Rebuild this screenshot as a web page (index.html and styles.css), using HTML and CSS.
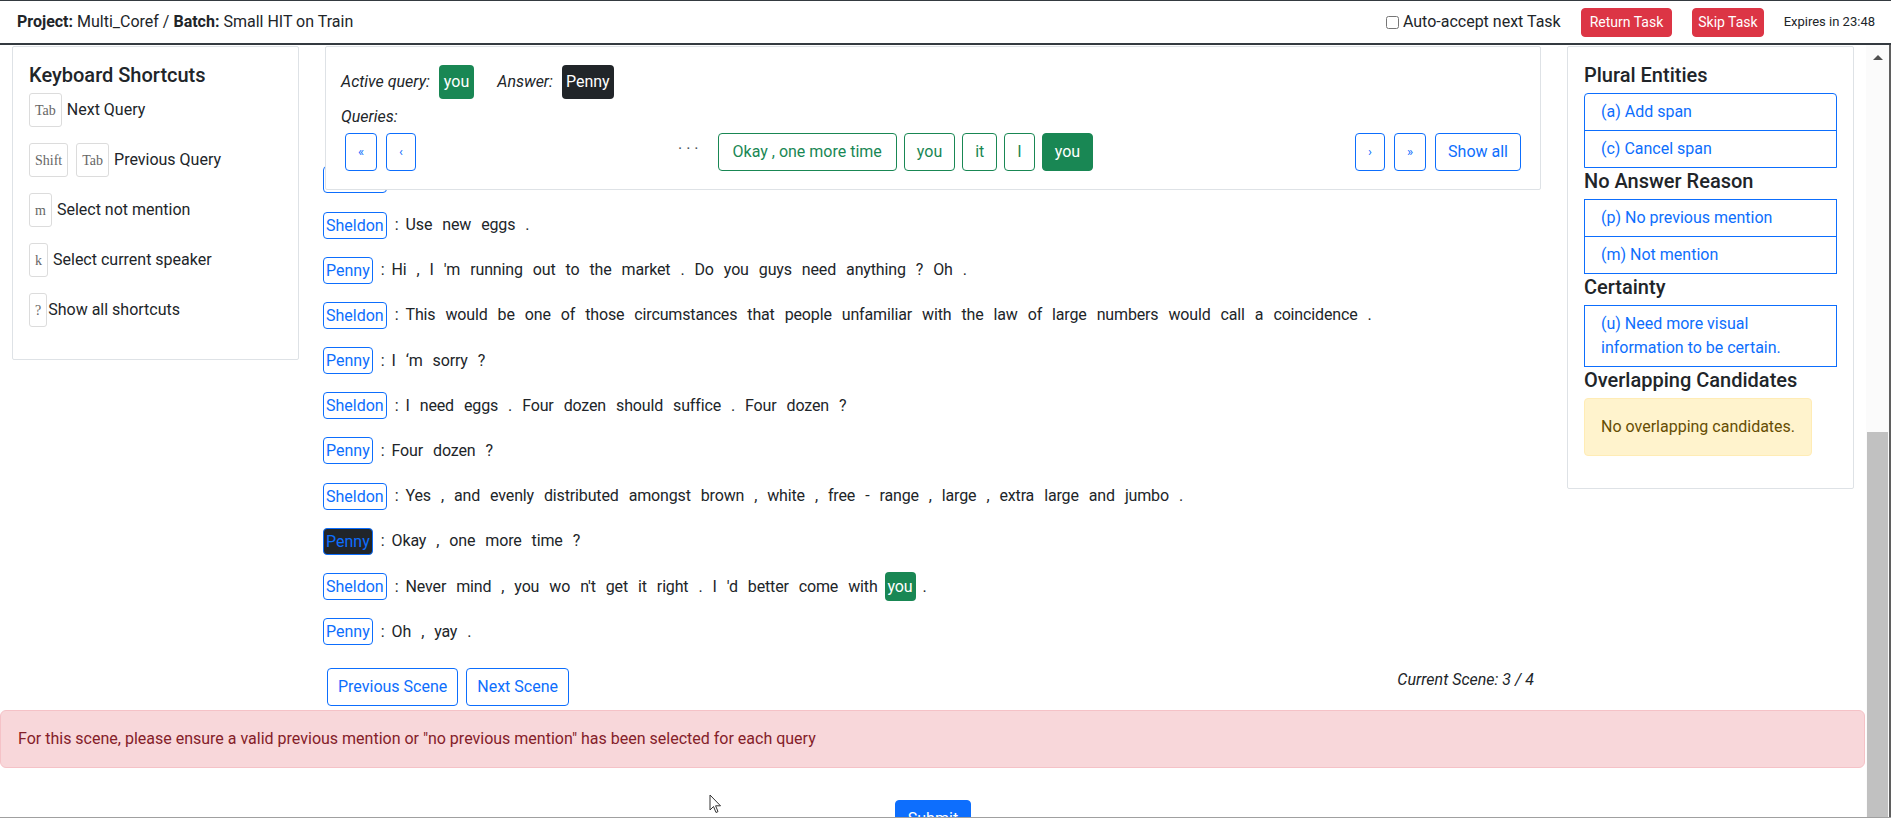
FILE: index.html
```html
<!DOCTYPE html>
<html lang="en">
<head>
<meta charset="utf-8">
<title>Multi_Coref</title>
<link rel="stylesheet" href="styles.css">
</head>
<body>
<header class="topbar">
  <div class="crumbs"><b>Project:</b> Multi_Coref / <b>Batch:</b> Small HIT on Train</div>
  <div class="actions">
    <label class="auto"><input type="checkbox"> Auto-accept next Task</label>
    <button class="btn-red">Return Task</button>
    <button class="btn-red narrow">Skip Task</button>
    <span class="expires">Expires in 23:48</span>
  </div>
</header>
<div class="frame">
  <div class="page">
    <div class="cols">
      <aside class="col">
        <div class="card side">
          <h5 class="title">Keyboard Shortcuts</h5>
          <div class="sc"><kbd class="key">Tab</kbd><span>Next Query</span></div>
          <div class="sc"><kbd class="key gap">Shift</kbd><kbd class="key">Tab</kbd><span>Previous Query</span></div>
          <div class="sc"><kbd class="key">m</kbd><span>Select not mention</span></div>
          <div class="sc"><kbd class="key">k</kbd><span>Select current speaker</span></div>
          <div class="sc"><kbd class="key tight">?</kbd><span>Show all shortcuts</span></div>
        </div>
      </aside>
      <main class="col mid">
        <div class="card query">
          <div class="qline">
            <em>Active query:</em><span class="badge green">you</span>
            <em class="ans">Answer:</em><span class="badge dark">Penny</span>
          </div>
          <div class="qlabel"><em>Queries:</em></div>
          <div class="qnav">
            <div class="grp">
              <button class="btn blue arrow">«</button>
              <button class="btn blue arrow">‹</button>
            </div>
            <div class="grp qs">
              <span class="dots">···</span>
              <button class="btn green-o wide">Okay , one more time</button>
              <button class="btn green-o">you</button>
              <button class="btn green-o">it</button>
              <button class="btn green-o">I</button>
              <button class="btn green-f">you</button>
            </div>
            <div class="grp">
              <button class="btn blue arrow">›</button>
              <button class="btn blue arrow">»</button>
              <button class="btn blue">Show all</button>
            </div>
          </div>
        </div>
        <div class="dialog">
          <div class="line"><span class="spk">Sheldon</span></div>
          <div class="line"><span class="spk">Sheldon</span><span class="colon">:</span><span class="t">Use</span><span class="t">new</span><span class="t">eggs</span><span class="t">.</span></div>
          <div class="line"><span class="spk">Penny</span><span class="colon">:</span><span class="t">Hi</span><span class="t">,</span><span class="t">I</span><span class="t">'m</span><span class="t">running</span><span class="t">out</span><span class="t">to</span><span class="t">the</span><span class="t">market</span><span class="t">.</span><span class="t">Do</span><span class="t">you</span><span class="t">guys</span><span class="t">need</span><span class="t">anything</span><span class="t">?</span><span class="t">Oh</span><span class="t">.</span></div>
          <div class="line"><span class="spk">Sheldon</span><span class="colon">:</span><span class="t">This</span><span class="t">would</span><span class="t">be</span><span class="t">one</span><span class="t">of</span><span class="t">those</span><span class="t">circumstances</span><span class="t">that</span><span class="t">people</span><span class="t">unfamiliar</span><span class="t">with</span><span class="t">the</span><span class="t">law</span><span class="t">of</span><span class="t">large</span><span class="t">numbers</span><span class="t">would</span><span class="t">call</span><span class="t">a</span><span class="t">coincidence</span><span class="t">.</span></div>
          <div class="line"><span class="spk">Penny</span><span class="colon">:</span><span class="t">I</span><span class="t">‘m</span><span class="t">sorry</span><span class="t">?</span></div>
          <div class="line"><span class="spk">Sheldon</span><span class="colon">:</span><span class="t">I</span><span class="t">need</span><span class="t">eggs</span><span class="t">.</span><span class="t">Four</span><span class="t">dozen</span><span class="t">should</span><span class="t">suffice</span><span class="t">.</span><span class="t">Four</span><span class="t">dozen</span><span class="t">?</span></div>
          <div class="line"><span class="spk">Penny</span><span class="colon">:</span><span class="t">Four</span><span class="t">dozen</span><span class="t">?</span></div>
          <div class="line"><span class="spk">Sheldon</span><span class="colon">:</span><span class="t">Yes</span><span class="t">,</span><span class="t">and</span><span class="t">evenly</span><span class="t">distributed</span><span class="t">amongst</span><span class="t">brown</span><span class="t">,</span><span class="t">white</span><span class="t">,</span><span class="t">free</span><span class="t">-</span><span class="t">range</span><span class="t">,</span><span class="t">large</span><span class="t">,</span><span class="t">extra</span><span class="t">large</span><span class="t">and</span><span class="t">jumbo</span><span class="t">.</span></div>
          <div class="line"><span class="spk active">Penny</span><span class="colon">:</span><span class="t">Okay</span><span class="t">,</span><span class="t">one</span><span class="t">more</span><span class="t">time</span><span class="t">?</span></div>
          <div class="line"><span class="spk">Sheldon</span><span class="colon">:</span><span class="t">Never</span><span class="t">mind</span><span class="t">,</span><span class="t">you</span><span class="t">wo</span><span class="t">n't</span><span class="t">get</span><span class="t">it</span><span class="t">right</span><span class="t">.</span><span class="t">I</span><span class="t">'d</span><span class="t">better</span><span class="t">come</span><span class="t">with</span><span class="t hl">you</span><span class="t">.</span></div>
          <div class="line"><span class="spk">Penny</span><span class="colon">:</span><span class="t">Oh</span><span class="t">,</span><span class="t">yay</span><span class="t">.</span></div>
        </div>
        <div class="scene">
          <div class="scene-btns">
            <button class="btn blue slim">Previous Scene</button>
            <button class="btn blue slim">Next Scene</button>
          </div>
          <em class="scene-no">Current Scene: 3 / 4</em>
        </div>
      </main>
      <aside class="col">
        <div class="card side">
          <h5 class="title">Plural Entities</h5>
          <div class="list first">
            <div class="item">(a) Add span</div>
            <div class="item">(c) Cancel span</div>
          </div>
          <h5 class="title">No Answer Reason</h5>
          <div class="list">
            <div class="item">(p) No previous mention</div>
            <div class="item">(m) Not mention</div>
          </div>
          <h5 class="title">Certainty</h5>
          <div class="list">
            <div class="item">(u) Need more visual information to be certain.</div>
          </div>
          <h5 class="title">Overlapping Candidates</h5>
          <div class="alert-warn">No overlapping candidates.</div>
        </div>
      </aside>
    </div>
    <div class="alert-danger">For this scene, please ensure a valid previous mention or "no previous mention" has been selected for each query</div>
    <div class="submit-wrap"><button class="btn-submit">Submit</button></div>
    <svg class="cursor" width="13" height="21" viewBox="0 0 13 21"><path d="M1 1 L1 16 L4.5 12.5 L7 18.5 L9 17.6 L6.6 11.8 L11.5 11.8 Z" fill="#fff" stroke="#333" stroke-width="1" stroke-linejoin="round"/></svg>
  </div>
  <div class="scrollbar">
    <div class="sb-up"><span class="tri"></span></div>
    <div class="thumb"></div>
  </div>
</div>
</body>
</html>
```
FILE: styles.css
```css
* { box-sizing: border-box; }
html, body { margin: 0; height: 100%; }
body {
  font-family: Roboto, "Liberation Sans", sans-serif;
  font-size: 16px;
  line-height: 1.5;
  color: #212529;
  background: #fff;
  overflow: hidden;
}
button { font-family: inherit; cursor: pointer; }

/* top bar */
.topbar {
  height: 45px;
  border-top: 1px solid #343a40;
  border-bottom: 2px solid #343a40;
  display: flex;
  align-items: center;
  justify-content: space-between;
  padding: 0 16px 0 17px;
}
.crumbs b { font-weight: 700; }
.actions { display: flex; align-items: center; }
.auto { display: flex; align-items: center; gap: 4px; margin-right: 20px; }
.auto input { margin: 0; width: 13px; height: 13px; }
.btn-red {
  background: #dc3545;
  color: #fff;
  border: 1px solid #dc3545;
  border-radius: 4px;
  font-size: 14px;
  line-height: 21px;
  padding: 3px 8px;
  margin-right: 20px;
}
.btn-red.narrow { padding: 3px 5px; margin-right: 20px; }
.expires { font-size: 13px; }

/* frame */
.frame {
  display: flex;
  height: 773px;
  border-bottom: 1px solid #a0a0a0;
}
.page { flex: 1; position: relative; overflow: hidden; }
.scrollbar {
  width: 25px;
  border-right: 2px solid #5f5f5f;
  background: #fbfbfb;
  display: flex;
  flex-direction: column;
  justify-content: space-between;
}
.sb-up { height: 24px; display: flex; align-items: center; justify-content: center; }
.tri {
  width: 0; height: 0;
  border-left: 5px solid transparent;
  border-right: 5px solid transparent;
  border-bottom: 5px solid #505050;
}
.thumb { height: 385px; width: 21px; margin-left: 1px; background: #c1c1c1; }

.cols {
  display: grid;
  grid-template-columns: 1fr 4fr 1fr;
  margin-top: 1px;
  align-items: start;
}
.col { padding: 0 12px; }

.card { border: 1px solid #dee2e6; border-radius: 2px; background: #fff; }
.side { padding: 16px; }
.title { font-size: 20px; font-weight: 500; line-height: 1.2; margin: 0 0 6px; }
.list + .title { margin-top: -1px; }

/* shortcuts */
.sc { display: flex; align-items: center; height: 34px; margin-bottom: 16px; }
.sc:first-of-type { margin-top: 1px; }
.key {
  display: inline-flex;
  align-items: center;
  height: 34px;
  padding: 0 5px;
  border: 1px solid #dcdcdc;
  border-radius: 3px;
  font-family: "Liberation Serif", serif;
  font-size: 14px;
  color: #666;
  margin-right: 5px;
}
.key.gap { margin-right: 8px; }
.key.tight { margin-right: 1px; }

/* query card */
.query {
  position: relative;
  z-index: 2;
  margin: 0 2px;
  padding: 18px 15px;
}
.qline { display: flex; align-items: center; height: 34px; }
.badge {
  display: inline-block;
  padding: 5px 5px;
  line-height: 24px;
  border-radius: 4px;
  color: #fff;
  margin-left: 9px;
}
.badge.green { background: #198754; }
.badge.dark { background: #212529; padding: 5px 4px; }
.ans { margin-left: 23px; }
.qlabel { margin-top: 6px; line-height: 24px; }
.qnav {
  margin-top: 4px;
  display: flex;
  justify-content: space-between;
  align-items: center;
  padding: 0 4px;
}
.grp { display: flex; align-items: center; gap: 9px; }
.qs { gap: 7px; }
.dots { letter-spacing: 4px; color: #495057; margin-right: 8px; position: relative; top: -3px; }
.btn {
  height: 38px;
  padding: 6px 12px;
  font-size: 16px;
  line-height: 24px;
  border-radius: 4px;
  background: transparent;
  border: 1px solid #0d6efd;
}
.btn.blue { color: #0d6efd; }
.btn.arrow { font-size: 13px; }
.btn.slim { padding: 6px 10px; }
.btn.wide { padding: 6px 14px; }
.btn.green-o { color: #198754; border-color: #198754; }
.btn.green-f { color: #fff; background: #198754; border-color: #198754; }

/* dialog */
.dialog { margin-top: -24.7px; }
.line {
  display: flex;
  align-items: center;
  height: 29px;
  margin-bottom: 16.2px;
  white-space: nowrap;
}
.spk {
  border: 1px solid #0d6efd;
  color: #0d6efd;
  border-radius: 4px;
  padding: 0 2px;
  height: 27px;
  line-height: 25px;
}
.spk.active { background: #212529; }
.colon { margin-left: 8px; }
.t { margin-left: 4px; padding: 0 3px; line-height: 24px; letter-spacing: -0.15px; }
.t.hl { background: #198754; color: #fff; border-radius: 4px; padding: 2px 3px; line-height: 25px; }

.scene {
  margin-top: 21.5px;
  display: flex;
  justify-content: space-between;
  align-items: flex-start;
}
.scene-btns { display: flex; gap: 8px; padding-left: 4px; }
.scene-no { padding-right: 9px; line-height: 24px; }

/* right card */
.list { border: 1px solid #0d6efd; margin-bottom: 2px; }
.list.first { border-radius: 4px 4px 0 0; }
.item { color: #0d6efd; padding: 6px 16px; line-height: 24px; }
.item + .item { border-top: 1px solid #0d6efd; }
.alert-warn {
  display: inline-block;
  padding: 16px;
  border: 1px solid #ffecb5;
  background: #fff3cd;
  color: #664d03;
  border-radius: 4px;
  margin-bottom: 16px;
}

/* bottom */
.alert-danger {
  margin-top: 4px;
  margin-right: 1px;
  padding: 16px 17px;
  background: #f8d7da;
  border: 1px solid #f5c2c7;
  color: #842029;
  border-radius: 6px;
}
.submit-wrap { margin-top: 32px; text-align: center; }
.btn-submit {
  background: #0d6efd;
  border: 1px solid #0d6efd;
  color: #fff;
  border-radius: 4px;
  font-size: 16px;
  line-height: 24px;
  padding: 6px 12px;
}
.cursor { position: absolute; left: 709px; top: 749px; }
```
